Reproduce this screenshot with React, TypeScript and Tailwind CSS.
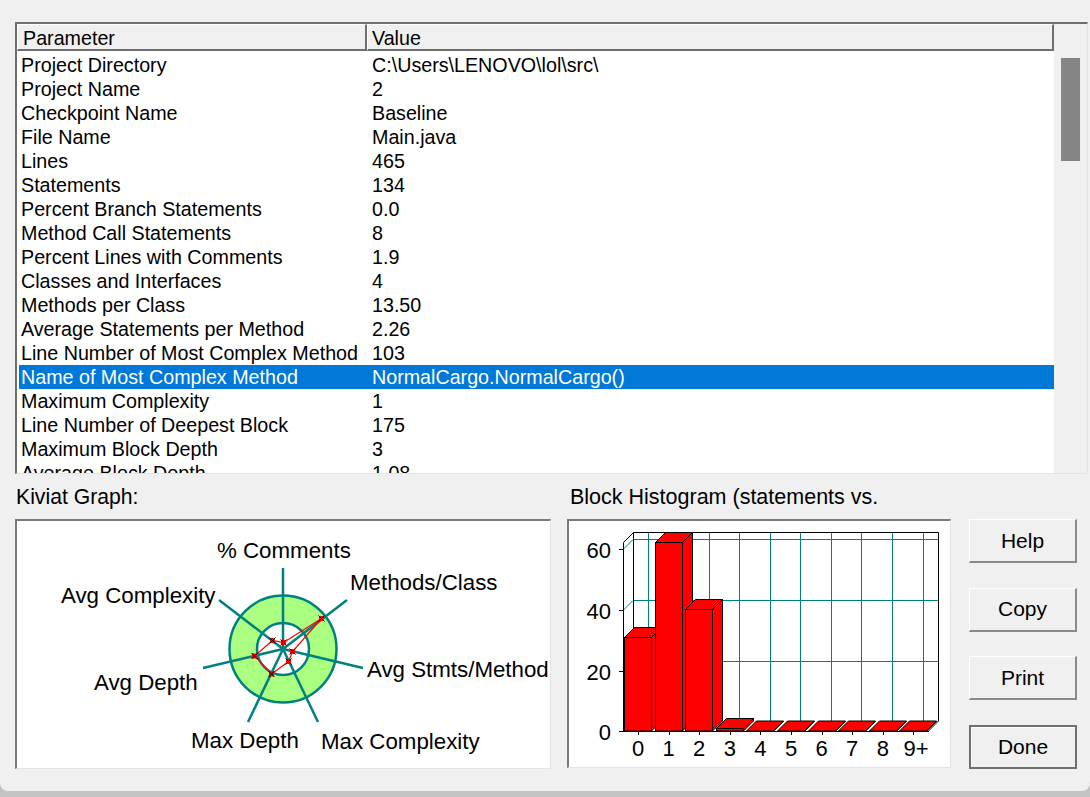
const rows: [string, string][] = [
  ['Project Directory', 'C:\\Users\\LENOVO\\lol\\src\\'],
  ['Project Name', '2'],
  ['Checkpoint Name', 'Baseline'],
  ['File Name', 'Main.java'],
  ['Lines', '465'],
  ['Statements', '134'],
  ['Percent Branch Statements', '0.0'],
  ['Method Call Statements', '8'],
  ['Percent Lines with Comments', '1.9'],
  ['Classes and Interfaces', '4'],
  ['Methods per Class', '13.50'],
  ['Average Statements per Method', '2.26'],
  ['Line Number of Most Complex Method', '103'],
  ['Name of Most Complex Method', 'NormalCargo.NormalCargo()'],
  ['Maximum Complexity', '1'],
  ['Line Number of Deepest Block', '175'],
  ['Maximum Block Depth', '3'],
  ['Average Block Depth', '1.08'],
];

const SELECTED = 13;
const TEAL = '#008080';

function MetricsTable() {
  return (
    <div className="flex h-[452px] border-t-2 border-l-2 border-b border-r border-t-[#6f6f6f] border-l-[#6f6f6f] border-b-[#e4e4e4] border-r-[#e4e4e4] bg-white">
      <div className="w-[1037px] min-w-0 overflow-hidden">
        <div className="flex h-[27px] text-[19.7px] leading-[26px]">
          <div className="w-[350px] pl-[5px] bg-[#f0f0f0] border-t border-l border-white border-r-2 border-b-2 border-r-[#6f6f6f] border-b-[#6f6f6f]">
            Parameter
          </div>
          <div className="flex-1 pl-[4px] bg-[#f0f0f0] border-t border-l border-white border-r-2 border-b-2 border-r-[#6f6f6f] border-b-[#6f6f6f]">
            Value
          </div>
        </div>
        <div className="pt-[2px] pl-[2px]">
          {rows.map(([name, value], i) => (
            <div
              key={name}
              className={`flex h-[24px] text-[19.7px] leading-[24px] whitespace-nowrap ${i === SELECTED ? 'bg-[#0078d7] text-white' : ''}`}
            >
              <div className="w-[353px] pl-[2px]">{name}</div>
              <div>{value}</div>
            </div>
          ))}
        </div>
      </div>
      <div className="flex-1 bg-[#f0f0f0] pl-[7px] pt-[34px]">
        <div className="w-[19px] h-[103px] bg-[#858585]" />
      </div>
    </div>
  );
}

function Kiviat() {
  const cx = 283;
  const cy = 649;
  const axes = [
    [283, 568],
    [347, 600],
    [363, 668],
    [318, 722],
    [248, 722],
    [203, 668],
    [219, 600],
  ];
  const points: [number, number][] = [
    [283.5, 642.5],
    [321.5, 618.5],
    [292.5, 651.5],
    [288.5, 661.5],
    [271.5, 674],
    [254.5, 656],
    [272.5, 640.5],
  ];
  const labels: [number, number, string][] = [
    [217, 558, '% Comments'],
    [350, 590, 'Methods/Class'],
    [367, 677, 'Avg Stmts/Method'],
    [321, 749, 'Max Complexity'],
    [191, 748, 'Max Depth'],
    [94, 690, 'Avg Depth'],
    [61, 603, 'Avg Complexity'],
  ];
  return (
    <svg viewBox="17 521 533 246" className="block w-[533px] h-[246px]">
      <circle cx={cx} cy={cy} r="53.5" fill="#aaff80" stroke={TEAL} strokeWidth="2.5" />
      <circle cx={cx} cy={cy} r="26" fill="#fff" stroke={TEAL} strokeWidth="2.5" />
      {axes.map(([x, y], i) => (
        <line key={i} x1={cx} y1={cy} x2={x} y2={y} stroke={TEAL} strokeWidth="2.5" />
      ))}
      <polygon points={points.map((p) => p.join(',')).join(' ')} fill="none" stroke="#ff0000" strokeWidth="1.2" />
      {points.map(([x, y], i) => (
        <g key={i}>
          <rect x={x - 2.5} y={y - 2.5} width="5" height="5" fill="#ff0000" />
          <path d={`M${x - 3} ${y - 3}L${x + 3} ${y + 3}M${x + 3} ${y - 3}L${x - 3} ${y + 3}`} stroke="#000" strokeWidth="1" />
        </g>
      ))}
      {labels.map(([x, y, text]) => (
        <text key={text} x={x} y={y} fontSize="22.3" fill="#000">
          {text}
        </text>
      ))}
    </svg>
  );
}

function Histogram() {
  const values = [637.5, 542.5, 609.5, 728.5, 731, 731, 731, 731, 731, 731];
  const step = 30.6;
  const ticks = ['0', '1', '2', '3', '4', '5', '6', '7', '8', '9+'];
  const gridX = [648.5, 679, 709.5, 739.5, 770.5, 800.5, 831.5, 861.5, 892.5, 923.5];
  return (
    <svg viewBox="569 521 381 246" className="block w-[381px] h-[246px]">
      {gridX.map((x) => (
        <line key={x} x1={x} y1="533" x2={x} y2="721" stroke={TEAL} strokeWidth="1" />
      ))}
      {[539.5, 600.5, 661.5].map((y) => (
        <g key={y}>
          <line x1="633" y1={y} x2="939" y2={y} stroke={TEAL} strokeWidth="1" />
          <line x1="623" y1={y + 10} x2="633" y2={y} stroke={TEAL} strokeWidth="1" />
        </g>
      ))}
      <path d="M633.5 721V532.5H938.5V721M623.5 731V542.5L633.5 532.5M623.5 731L633.5 721M938.5 721L928.5 731" fill="none" stroke="#000" strokeWidth="1" />
      {[549.5, 610.5, 671.5, 731.5].map((y) => (
        <line key={y} x1="619" y1={y} x2="623" y2={y} stroke="#000" strokeWidth="1" />
      ))}
      <line x1="623" y1="731.5" x2="929" y2="731.5" stroke="#000" strokeWidth="1" />
      {values.map((top, i) => {
        const x = Math.round(624 + step * i) + 0.5;
        const w = 27;
        const d = 10;
        return (
          <g key={i} fill="#ff0000" stroke="#000" strokeWidth="1">
            <path d={`M${x + w} ${top}L${x + w + d} ${top - d}V${731 - d}L${x + w} 731Z`} />
            <path d={`M${x} ${top}L${x + d} ${top - d}H${x + w + d}L${x + w} ${top}Z`} />
            <rect x={x} y={top} width={w} height={731 - top} />
          </g>
        );
      })}
      {ticks.map((t, i) => {
        const x = 638 + step * i;
        return (
          <g key={t}>
            <line x1={Math.round(x) + 0.5} y1="731" x2={Math.round(x) + 0.5} y2="735" stroke="#000" strokeWidth="1" />
            <text x={t === '9+' ? 916 : x} y="756" fontSize="22" textAnchor="middle" fill="#000">
              {t}
            </text>
          </g>
        );
      })}
      {[
        ['60', 558],
        ['40', 619],
        ['20', 680],
        ['0', 740],
      ].map(([t, y]) => (
        <text key={t} x="611" y={y} fontSize="22" textAnchor="end" fill="#000">
          {t}
        </text>
      ))}
    </svg>
  );
}

function Btn({ label, primary }: { label: string; primary?: boolean }) {
  return (
    <button
      className={`w-[108px] h-[44px] bg-[#f0f0f0] text-[21px] text-black ${
        primary
          ? 'border-2 border-[#6f6f6f] shadow-[inset_1px_1px_0_#fff]'
          : 'border-t border-l border-r-2 border-b-2 border-t-white border-l-white border-r-[#8a8a8a] border-b-[#8a8a8a]'
      }`}
    >
      {label}
    </button>
  );
}

function Sunken({ children }: { children: React.ReactNode }) {
  return (
    <div className="bg-white border-t-2 border-l-2 border-r border-b border-t-[#7a7a7a] border-l-[#7a7a7a] border-r-[#e4e4e4] border-b-[#e4e4e4]">
      {children}
    </div>
  );
}

export default function App() {
  return (
    <div className="w-[1090px] h-[797px] overflow-hidden bg-gradient-to-b from-[#969696] to-[#c4c4c4] font-['Liberation_Sans',Arial,sans-serif] text-black">
      <div className="h-[791px] bg-[#f0f0f0] rounded-b-[8px] pt-[22px] pl-[15px] pr-[2px]">
        <MetricsTable />
        <div className="flex mt-[11px] h-[24px] leading-[24px]">
          <div className="w-[555px] pl-[1px] text-[21.2px]">Kiviat Graph:</div>
          <div className="text-[21.5px]">Block Histogram (statements vs.</div>
        </div>
        <div className="flex mt-[10px]">
          <Sunken>
            <Kiviat />
          </Sunken>
          <div className="ml-[16px]">
            <Sunken>
              <Histogram />
            </Sunken>
          </div>
          <div className="ml-[18px] flex flex-col gap-[24.5px]">
            <Btn label="Help" />
            <Btn label="Copy" />
            <Btn label="Print" />
            <Btn label="Done" primary />
          </div>
        </div>
      </div>
    </div>
  );
}
